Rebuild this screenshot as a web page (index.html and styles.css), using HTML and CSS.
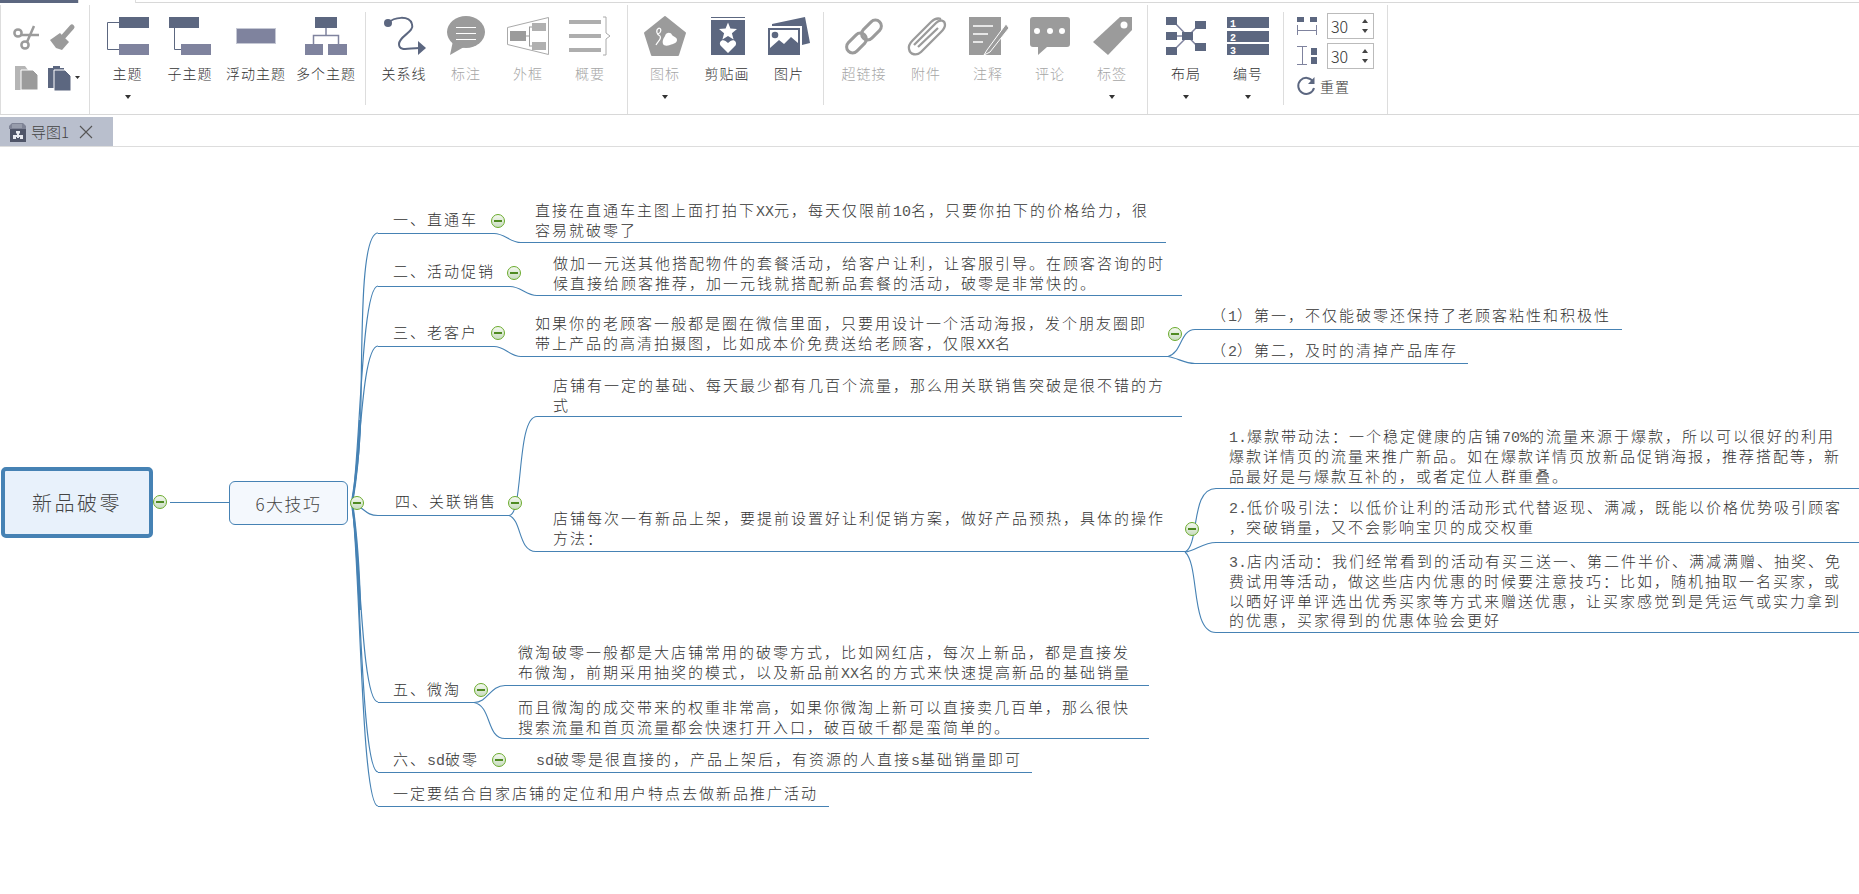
FILE: index.html
```html
<!DOCTYPE html>
<html lang="zh-CN">
<head>
    <meta charset="UTF-8">
    <title>新品破零</title>
    <link rel="stylesheet" href="styles.css">
</head>
<body>
    <div class="topstrip">
        <div class="strip-active"></div>
        <div class="strip-tab"></div>
        <div class="strip-rest"></div>
    </div>

    <div class="toolbar">
        <div class="group group-edit">
            <svg class="edit-icon" viewBox="0 0 36 40">
                <g fill="none" stroke="#9b9b9b" stroke-width="2.5">
                    <circle cx="10" cy="16" r="3.6"/>
                    <circle cx="17" cy="28" r="3.6"/>
                    <path d="M13 18L31 18M19 25L26 9"/>
                </g>
            </svg>
            <svg class="edit-icon" viewBox="0 0 36 40">
                <path d="M28 10L20 19" stroke="#9b9b9b" stroke-width="5" stroke-linecap="round"/>
                <path d="M6 23L16 16L25 25L18 33L12 31Z" fill="#9b9b9b"/>
            </svg>
            <svg class="edit-icon" viewBox="0 0 36 40">
                <path d="M7 8H17L20 12V32H7Z" fill="#b5b5b5"/>
                <path d="M13 12H25L30 17V32H13Z" fill="#9b9b9b" stroke="#fff"/>
            </svg>
            <svg class="edit-icon" viewBox="0 0 36 40">
                <path d="M4 10H9V8H16V10H20V30H4Z" fill="#5c6780"/>
                <path d="M10 12H21L27 18V33H10Z" fill="#5c6780" stroke="#fff"/>
                <path d="M31 18H36L33.500 21Z" fill="#333"/>
            </svg>
        </div>

        <div class="group group-insert">
            <div class="section section-topic">
                <div class="tool tool-w63">
                    <svg class="icon" viewBox="0 0 50 40">
                        <rect x="16" y="1" width="30" height="11" fill="#5c6780"/>
                        <rect x="16" y="28" width="30" height="11" fill="#7f839e"/>
                        <path d="M16 6.500H4.500V33.500H16" fill="none" stroke="#5c6780"/>
                    </svg>
                    <span class="label">主题</span>
                    <i class="caret"></i>
                </div>
                <div class="tool tool-w62">
                    <svg class="icon" viewBox="0 0 50 40">
                        <rect x="4" y="1" width="30" height="11" fill="#5c6780"/>
                        <rect x="16" y="28" width="30" height="11" fill="#7f839e"/>
                        <path d="M9.500 12V33.500H16" fill="none" stroke="#5c6780"/>
                    </svg>
                    <span class="label">子主题</span>
                </div>
                <div class="tool tool-w70">
                    <svg class="icon" viewBox="0 0 50 40">
                        <rect x="5.500" y="12.500" width="39" height="15" fill="#7f839e" stroke="#c5c8d4"/>
                    </svg>
                    <span class="label">浮动主题</span>
                </div>
                <div class="tool tool-w70">
                    <svg class="icon" viewBox="0 0 50 40">
                        <rect x="14" y="1" width="22" height="11" fill="#5c6780"/>
                        <rect x="4" y="28" width="18" height="11" fill="#7f839e"/>
                        <rect x="27" y="28" width="19" height="11" fill="#7f839e"/>
                        <path d="M25 12V19.500M12.500 28V19.500H37.500V28" fill="none" stroke="#7f839e" stroke-width="1.500"/>
                    </svg>
                    <span class="label">多个主题</span>
                </div>
            </div>
            <div class="sep sep-a"></div>
            <div class="section section-line">
                <div class="tool">
                    <svg class="icon" viewBox="0 0 50 40">
                        <circle cx="9" cy="7" r="4" fill="#5c6780"/>
                        <path d="M9 7C15 1 30 -1 33 8C36 16 20 20 20 28C20 36 30 32 40 32" fill="none" stroke="#5c6780" stroke-width="2"/>
                        <path d="M39 25L47 32L39 39Z" fill="#5c6780"/>
                    </svg>
                    <span class="label">关系线</span>
                </div>
                <div class="tool tool-off">
                    <svg class="icon" viewBox="0 0 50 40">
                        <ellipse cx="25" cy="16" rx="19" ry="16" fill="#9b9b9b"/>
                        <path d="M12 25L9 39L23 31Z" fill="#9b9b9b"/>
                        <path d="M15 11.500H35M15 17.500H35M15 23.500H35" stroke="#fff"/>
                    </svg>
                    <span class="label">标注</span>
                </div>
                <div class="tool tool-off">
                    <svg class="icon" viewBox="0 0 50 40">
                        <path d="M4.500 11.500L45.500 1.500V38.500L4.500 28.500Z" fill="none" stroke="#aaa"/>
                        <rect x="7" y="15" width="16" height="10" fill="#9b9b9b"/>
                        <rect x="29" y="7" width="14" height="8" fill="#b0b0b0"/>
                        <rect x="29" y="26" width="14" height="8" fill="#b0b0b0"/>
                        <path d="M23 20H26M26.500 11V30M26 11H29M26 30H29" fill="none" stroke="#9b9b9b"/>
                    </svg>
                    <span class="label">外框</span>
                </div>
                <div class="tool tool-off">
                    <svg class="icon" viewBox="0 0 50 40">
                        <rect x="4" y="4" width="32" height="4" fill="#aeaeae"/>
                        <rect x="4" y="18" width="32" height="4" fill="#aeaeae"/>
                        <rect x="4" y="32" width="32" height="4" fill="#aeaeae"/>
                        <path d="M38 1H41V17L45 20L41 23V39H38" fill="none" stroke="#aaa"/>
                    </svg>
                    <span class="label">概要</span>
                </div>
            </div>
        </div>

        <div class="group group-media">
            <div class="section section-art">
                <div class="tool tool-off">
                    <svg class="icon" viewBox="0 0 50 40">
                        <path d="M25 1L45 17L38 39H12L5 17Z" fill="#9b9b9b" stroke="#9b9b9b" stroke-linejoin="round" stroke-width="2"/>
                        <path d="M23 28C22 24 24 22 25 20C26 16 31 16 32 19C34 21 37 21 37 24C37 27 33 28 30 29C27 30 24 30 23 28Z" fill="#fff"/>
                        <path d="M19 12C15 14 17 19 20 20C22 23 18 25 16 29M19 12C22 13 21 17 18 18" fill="none" stroke="#fff" stroke-width="1.200"/>
                    </svg>
                    <span class="label">图标</span>
                    <i class="caret"></i>
                </div>
                <div class="tool">
                    <svg class="icon" viewBox="0 0 50 40">
                        <path d="M9 1.500H43" stroke="#5c6780"/>
                        <rect x="9" y="4" width="34" height="35" fill="#5c6780"/>
                        <path d="M26 6.500L28.400 12.600L35 13L29.900 17.200L31.600 23.500L26 20L20.400 23.500L22.100 17.200L17 13L23.600 12.600Z" fill="#fff"/>
                        <path d="M26 37L18.500 29.500C16.500 26 20 22.500 23.500 25L26 27L28.500 25C32 22.500 35.500 26 33.500 29.500Z" fill="#fff"/>
                    </svg>
                    <span class="label">剪贴画</span>
                </div>
                <div class="tool">
                    <svg class="icon" viewBox="0 0 50 40">
                        <path d="M8 8L41 1L46 27L38 29V10H8Z" fill="#5c6780"/>
                        <rect x="4" y="12" width="32" height="27" fill="#5c6780"/>
                        <path d="M6 14H34V27L27 21L20 28L15 24L6 32Z" fill="#fff"/>
                        <circle cx="11" cy="19" r="3.300" fill="#5c6780"/>
                    </svg>
                    <span class="label">图片</span>
                </div>
            </div>
            <div class="sep sep-b"></div>
            <div class="section section-note">
                <div class="tool tool-off">
                    <svg class="icon" viewBox="0 0 50 40">
                        <g fill="none" stroke="#9b9b9b" stroke-width="3">
                            <rect x="21" y="8" width="23" height="12" rx="6" transform="rotate(-45 32.500 14)"/>
                            <rect x="6" y="21" width="23" height="12" rx="6" transform="rotate(-45 17.500 27)"/>
                        </g>
                    </svg>
                    <span class="label">超链接</span>
                </div>
                <div class="tool tool-off">
                    <svg class="icon" viewBox="0 0 50 40">
                        <path d="M13 29L35 7C39 3 44 4 44 9C44 12 42 14 40 16L20 36C16 40 9 39 8 33C7 29 10 26 12 24L30 6C33 3 37 2 40 3M17 31L37 12" fill="none" stroke="#9b9b9b" stroke-width="2.300"/>
                    </svg>
                    <span class="label">附件</span>
                </div>
                <div class="tool tool-off">
                    <svg class="icon" viewBox="0 0 50 40">
                        <rect x="6" y="1" width="32" height="38" fill="#9b9b9b"/>
                        <path d="M10 10H30M10 18H25M10 26H20" stroke="#fff" stroke-width="1.600"/>
                        <path d="M43 8L24 34L21 39L27 36L46 12Z" fill="#9b9b9b" stroke="#fff"/>
                    </svg>
                    <span class="label">注释</span>
                </div>
                <div class="tool tool-off">
                    <svg class="icon" viewBox="0 0 50 40">
                        <path d="M8 1H42C44 1 45 2 45 4V28C45 30 44 31 42 31H22L13 39V31H8C6 31 5 30 5 28V4C5 2 6 1 8 1Z" fill="#9b9b9b"/>
                        <circle cx="12" cy="15" r="3" fill="#fff"/>
                        <circle cx="25" cy="15" r="3" fill="#fff"/>
                        <circle cx="37" cy="15" r="3" fill="#fff"/>
                    </svg>
                    <span class="label">评论</span>
                </div>
                <div class="tool tool-off">
                    <svg class="icon" viewBox="0 0 50 40">
                        <path d="M6 26L33 1H45V14L21 39Z" fill="#9b9b9b"/>
                        <circle cx="37" cy="9" r="3.500" fill="#fff"/>
                    </svg>
                    <span class="label">标签</span>
                    <i class="caret"></i>
                </div>
            </div>
        </div>

        <div class="group group-layout">
            <div class="section section-layout">
                <div class="tool">
                    <svg class="icon" viewBox="0 0 50 40">
                        <path d="M12 5L38 32M12 35L38 9M12 20H25" stroke="#7f839e" stroke-width="1.500"/>
                        <rect x="5" y="1" width="11" height="8" fill="#5c6780"/>
                        <rect x="5" y="16" width="11" height="8" fill="#5c6780"/>
                        <rect x="5" y="31" width="11" height="8" fill="#5c6780"/>
                        <rect x="21" y="16" width="11" height="8" fill="#5c6780"/>
                        <rect x="34" y="5" width="11" height="8" fill="#5c6780"/>
                        <rect x="34" y="27" width="11" height="8" fill="#5c6780"/>
                    </svg>
                    <span class="label">布局</span>
                    <i class="caret"></i>
                </div>
                <div class="tool">
                    <svg class="icon" viewBox="0 0 50 40">
                        <rect x="4" y="1" width="42" height="11" fill="#5c6780"/>
                        <rect x="4" y="15" width="42" height="11" fill="#5c6780"/>
                        <rect x="4" y="28" width="42" height="11" fill="#5c6780"/>
                        <text class="icon-num" x="7" y="10.500">1</text>
                        <text class="icon-num" x="7" y="24.500">2</text>
                        <text class="icon-num" x="7" y="37.500">3</text>
                    </svg>
                    <span class="label">编号</span>
                    <i class="caret"></i>
                </div>
            </div>
            <div class="sep sep-c"></div>
            <div class="spacing">
                <div class="spacing-row">
                    <svg class="spacing-icon" viewBox="0 0 22 28">
                        <rect x="1" y="5" width="7" height="5" fill="#5c6780"/>
                        <rect x="14" y="5" width="7" height="5" fill="#5c6780"/>
                        <path d="M1.500 13V23M20.500 13V23M1.500 18.500H20.500" fill="none" stroke="#7f839e"/>
                    </svg>
                    <div class="spin">
                        <span class="spin-value">30</span>
                        <span class="spin-arrows"><i class="spin-up"></i><i class="spin-down"></i></span>
                    </div>
                </div>
                <div class="spacing-row">
                    <svg class="spacing-icon" viewBox="0 0 22 28">
                        <path d="M1 4.500H11M1 22.500H11M6.500 4.500V22.500" fill="none" stroke="#7f839e"/>
                        <rect x="15" y="6" width="6" height="7" fill="#5c6780"/>
                        <rect x="15" y="15" width="6" height="7" fill="#5c6780"/>
                    </svg>
                    <div class="spin">
                        <span class="spin-value">30</span>
                        <span class="spin-arrows"><i class="spin-up"></i><i class="spin-down"></i></span>
                    </div>
                </div>
                <div class="reset">
                    <svg class="reset-icon" viewBox="0 0 20 20">
                        <path d="M17 5.500A8 8 0 1 0 18 12" fill="none" stroke="#5c6780" stroke-width="2"/>
                        <path d="M18.500 1V8H12Z" fill="#5c6780"/>
                    </svg>
                    <span>重置</span>
                </div>
            </div>
        </div>
    </div>

    <div class="tabbar">
        <div class="tab">
            <svg class="tab-icon" viewBox="0 0 20 20">
                <path d="M2 7V4L5 1H16L19 4V7Z" fill="#7f8496"/>
                <path d="M5 3H15M5 5H15" stroke="#c6cad6" stroke-width="0.700"/>
                <rect x="3" y="7" width="16" height="13" fill="#4f5568"/>
                <path d="M9 9H13V11.500H12V13H16V17H13V15H12V16H10V15H9V17H6V13H10V11.500H9Z" fill="#e8eaf0"/>
            </svg>
            <span class="tab-title">导图1</span>
            <svg class="tab-close" viewBox="0 0 14 14">
                <path d="M1 1L13 13M13 1L1 13" stroke="#555" stroke-width="1.100"/>
            </svg>
        </div>
    </div>

    <div class="canvas">
        <svg class="links" viewBox="0 147 1859 747">
            <g class="trunk">
                <path d="M352 503C358 470 361 440 361 400C362 320 362 233 378 233"/>
                <path d="M352 503C360 460 361 286 378 286"/>
                <path d="M352 503C360 470 361 346 378 346"/>
                <path d="M352 503C360 540 361 702 378 702"/>
                <path d="M352 503C360 550 361 772 378 772"/>
                <path d="M352 503C360 560 361 806 378 806"/>
                <path d="M357 505C366 511 368 515.500 378 515.500"/>
                <path class="trunk-thick" d="M352 503C356 480 359 450 360 420"/>
                <path class="trunk-thick" d="M352 503C356 530 359 570 360 610"/>
            </g>
            <g class="branch">
                <path d="M170 502.500H229"/>
                <path d="M378 233.500H494C505 233.500 510 242.500 521 242.500H1166"/>
                <path d="M378 286.500H510C521 286.500 526 295.500 537 295.500H1182"/>
                <path d="M378 346.500H494C505 346.500 510 356.500 521 356.500H1168"/>
                <path d="M1168 356.500C1182 353 1180 329.500 1195 329.500H1622"/>
                <path d="M1168 356.500C1178 358 1184 363.500 1195 363.500H1468"/>
                <path d="M378 515.500H509C524 515.500 516 416.500 537 416.500H1182"/>
                <path d="M509 515.500C522 520 518 551.500 536 551.500H1185"/>
                <path d="M1185 552C1200 545 1190 488.500 1216 488.500H1859"/>
                <path d="M1185 552C1195 551 1203 542.500 1216 542.500H1859"/>
                <path d="M1185 552C1200 565 1190 632.500 1216 632.500H1859"/>
                <path d="M378 702.500H474C488 702.500 490 685.500 505 685.500H1149"/>
                <path d="M474 702.500C492 706 486 738.500 505 738.500H1149"/>
                <path d="M378 772.500H1032"/>
                <path d="M378 806.500H829"/>
            </g>
        </svg>

        <div class="root">新品破零</div>
        <div class="topic">6大技巧</div>

        <div class="node l1">一、直通车</div>
        <div class="node l2">二、活动促销</div>
        <div class="node l3">三、老客户</div>
        <div class="node l4">四、关联销售</div>
        <div class="node l5">五、微淘</div>
        <div class="node l6">六、<span class="latin">sd</span>破零</div>
        <div class="node l7">一定要结合自家店铺的定位和用户特点去做新品推广活动</div>

        <div class="node t1">直接在直通车主图上面打拍下<span class="latin">XX</span>元，每天仅限前<span class="latin">10</span>名，只要你拍下的价格给力，很<br>容易就破零了</div>
        <div class="node t2">做加一元送其他搭配物件的套餐活动，给客户让利，让客服引导。在顾客咨询的时<br>候直接给顾客推荐，加一元钱就搭配新品套餐的活动，破零是非常快的。</div>
        <div class="node t3">如果你的老顾客一般都是圈在微信里面，只要用设计一个活动海报，发个朋友圈即<br>带上产品的高清拍摄图，比如成本价免费送给老顾客，仅限<span class="latin">XX</span>名</div>
        <div class="node t3a">（<span class="latin">1</span>）第一，不仅能破零还保持了老顾客粘性和积极性</div>
        <div class="node t3b">（<span class="latin">2</span>）第二，及时的清掉产品库存</div>
        <div class="node t4a">店铺有一定的基础、每天最少都有几百个流量，那么用关联销售突破是很不错的方<br>式</div>
        <div class="node t4b">店铺每次一有新品上架，要提前设置好让利促销方案，做好产品预热，具体的操作<br>方法：</div>
        <div class="node t41"><span class="latin">1.</span>爆款带动法：一个稳定健康的店铺<span class="latin">70%</span>的流量来源于爆款，所以可以很好的利用<br>爆款详情页的流量来推广新品。如在爆款详情页放新品促销海报，推荐搭配等，新<br>品最好是与爆款互补的，或者定位人群重叠。</div>
        <div class="node t42"><span class="latin">2.</span>低价吸引法：以低价让利的活动形式代替返现、满减，既能以价格优势吸引顾客<br>，突破销量，又不会影响宝贝的成交权重</div>
        <div class="node t43"><span class="latin">3.</span>店内活动：我们经常看到的活动有买三送一、第二件半价、满减满赠、抽奖、免<br>费试用等活动，做这些店内优惠的时候要注意技巧：比如，随机抽取一名买家，或<br>以晒好评单评选出优秀买家等方式来赠送优惠，让买家感觉到是凭运气或实力拿到<br>的优惠，买家得到的优惠体验会更好</div>
        <div class="node t5a">微淘破零一般都是大店铺常用的破零方式，比如网红店，每次上新品，都是直接发<br>布微淘，前期采用抽奖的模式，以及新品前<span class="latin">XX</span>名的方式来快速提高新品的基础销量</div>
        <div class="node t5b">而且微淘的成交带来的权重非常高，如果你微淘上新可以直接卖几百单，那么很快<br>搜索流量和首页流量都会快速打开入口，破百破千都是蛮简单的。</div>
        <div class="node t6"><span class="latin">sd</span>破零是很直接的，产品上架后，有资源的人直接<span class="latin">s</span>基础销量即可</div>

        <span class="toggle g-root"></span>
        <span class="toggle g-topic"></span>
        <span class="toggle g1"></span>
        <span class="toggle g2"></span>
        <span class="toggle g3"></span>
        <span class="toggle g3r"></span>
        <span class="toggle g4"></span>
        <span class="toggle g4r"></span>
        <span class="toggle g5"></span>
        <span class="toggle g6"></span>
    </div>
</body>
</html>
```

FILE: styles.css
```css
* {
    box-sizing: border-box;
}
html, body {
    margin: 0;
    height: 894px;
    overflow: hidden;
    background: #fff;
}
body {
    font-family: "Noto Sans CJK SC", "Noto Sans", sans-serif;
    color: #333;
}

/* top strip */
.topstrip {
    display: flex;
    height: 3px;
}
.strip-active {
    width: 78px;
    background: #5c6780;
}
.strip-tab {
    width: 58px;
    border-left: 1px solid #ddd;
    border-right: 1px solid #ddd;
}
.strip-rest {
    flex: 1;
    border-bottom: 1px solid #d8d8d8;
}

/* toolbar */
.toolbar {
    display: flex;
    height: 112px;
    padding-top: 2px;
    border-bottom: 1px solid #d8d8d8;
}
.group {
    display: flex;
    border-right: 1px solid #ddd;
}
.group-edit {
    display: grid;
    grid-template-columns: 36px 36px;
    grid-auto-rows: 41px;
    width: 90px;
    padding: 12px 0 0 7px;
    border-left: 1px solid #ddd;
}
.edit-icon {
    width: 36px;
    height: 40px;
    overflow: visible;
}
.group-insert {
    width: 538px;
    padding-left: 6px;
}
.group-media {
    width: 520px;
    padding-left: 6px;
}
.group-layout {
    width: 240px;
    padding-left: 7px;
}
.section {
    display: flex;
}
.sep {
    width: 1px;
    margin: 7px 0 9px;
    background: #ddd;
}
.sep-a {
    margin-left: 4px;
    margin-right: 7px;
}
.sep-b {
    margin-left: 3px;
    margin-right: 9px;
}
.sep-c {
    margin-left: 4px;
}
.tool {
    display: flex;
    flex-direction: column;
    align-items: center;
    width: 62px;
    padding-top: 11px;
}
.tool-w62 {
    width: 62px;
}
.tool-w63 {
    width: 63px;
}
.tool-w70 {
    width: 70px;
}
.icon {
    flex: none;
    width: 50px;
    height: 40px;
    overflow: visible;
}
.icon-num {
    font-family: "Liberation Mono", monospace;
    font-size: 10px;
    font-weight: bold;
    fill: #fff;
}
.label {
    margin-top: 7px;
    font-size: 14px;
    font-weight: 300;
    line-height: 20px;
    letter-spacing: 1px;
    white-space: nowrap;
}
.tool-off .label {
    color: #a6a6a6;
}
.caret {
    width: 0;
    height: 0;
    margin-top: 12px;
    border-left: 3px solid transparent;
    border-right: 3px solid transparent;
    border-top: 4px solid #333;
}

/* spacing controls */
.spacing {
    padding: 8px 0 0 12px;
}
.spacing-row {
    display: flex;
    align-items: center;
    gap: 9px;
    height: 26px;
    margin-bottom: 4px;
}
.spacing-icon {
    width: 22px;
    height: 28px;
}
.spin {
    display: flex;
    justify-content: space-between;
    width: 47px;
    height: 26px;
    padding: 0 5px 0 3px;
    border: 1px solid #bbb;
}
.spin-value {
    font-size: 16px;
    font-weight: 300;
    line-height: 24px;
}
.spin-arrows {
    display: flex;
    flex-direction: column;
    justify-content: center;
    gap: 6px;
}
.spin-up, .spin-down {
    width: 0;
    height: 0;
    border-left: 3px solid transparent;
    border-right: 3px solid transparent;
}
.spin-up {
    border-bottom: 4px solid #444;
}
.spin-down {
    border-top: 4px solid #444;
}
.reset {
    display: flex;
    align-items: center;
    gap: 4px;
    height: 22px;
    margin-top: 6px;
    font-size: 14px;
    font-weight: 300;
    letter-spacing: 1px;
}
.reset-icon {
    width: 20px;
    height: 20px;
}

/* tab bar */
.tabbar {
    height: 30px;
    margin-top: 2px;
    border-bottom: 1px solid #ddd;
}
.tab {
    display: flex;
    align-items: center;
    width: 113px;
    height: 29px;
    padding-left: 7px;
    background: #b9bfcd;
}
.tab-icon {
    width: 20px;
    height: 20px;
}
.tab-title {
    margin-left: 4px;
    font-size: 15px;
    font-weight: 300;
    color: #444;
}
.tab-close {
    width: 14px;
    height: 14px;
    margin-left: 10px;
}

/* mind map canvas */
.canvas {
    position: relative;
    height: 747px;
    overflow: hidden;
}
.links {
    position: absolute;
    left: 0;
    top: 0;
    width: 1859px;
    height: 747px;
}
.links path {
    fill: none;
    stroke: #4682b4;
}
.trunk path {
    stroke-width: 1.200;
}
.links .trunk-thick {
    stroke-width: 2.400;
}
.branch path {
    stroke-width: 1.100;
}
.root, .topic {
    position: absolute;
    display: flex;
    align-items: center;
    justify-content: center;
    white-space: nowrap;
    font-weight: 300;
    color: #444;
}
.root {
    left: 1px;
    top: 320px;
    width: 152px;
    height: 71px;
    border: 4px solid #4682b4;
    border-radius: 5px;
    background: #e8f1fb;
    font-size: 20px;
    letter-spacing: 2.500px;
}
.topic {
    left: 229px;
    top: 334px;
    width: 119px;
    height: 44px;
    border: 1px solid #4682b4;
    border-radius: 6px;
    background: #f4f8fd;
    font-size: 17px;
    letter-spacing: 1.500px;
}
.node {
    position: absolute;
    margin-top: -2px;
    font-family: "Noto Sans CJK SC", sans-serif;
    font-size: 15px;
    font-weight: 300;
    line-height: 19.500px;
    letter-spacing: 2px;
    white-space: nowrap;
    color: #333;
}
.latin {
    font-family: "Liberation Mono", monospace;
    line-height: 1;
    letter-spacing: 0;
    color: #555;
}
.l1, .l2, .l3, .l5, .l6, .l7 { left: 393px; }
.l1 { top: 64px; }
.l2 { top: 116px; }
.l3 { top: 177px; }
.l4 { left: 395px; top: 346px; }
.l5 { top: 534px; }
.l6 { top: 604px; }
.l7 { top: 638px; }
.t1 { left: 535px; top: 55px; }
.t2 { left: 553px; top: 108px; }
.t3 { left: 535px; top: 168px; }
.t3a { left: 1211px; top: 160px; }
.t3b { left: 1211px; top: 195px; }
.t4a { left: 553px; top: 230px; }
.t4b { left: 553px; top: 363px; }
.t41 { left: 1229px; top: 281px; }
.t42 { left: 1229px; top: 352px; }
.t43 { left: 1229px; top: 406px; }
.t5a { left: 518px; top: 497px; }
.t5b { left: 518px; top: 552px; }
.t6 { left: 536px; top: 604px; }

.toggle {
    position: absolute;
    width: 14px;
    height: 14px;
    border: 1px solid #6aab2c;
    border-radius: 50%;
    background: linear-gradient(#f4f8f0, #c9dcc0);
}
.toggle::after {
    content: "";
    position: absolute;
    left: 2px;
    top: 5px;
    width: 8px;
    height: 2px;
    background: #4f8a22;
}
.g-root { left: 153px; top: 348px; }
.g-topic { left: 350px; top: 349px; }
.g1 { left: 491px; top: 67px; }
.g2 { left: 507px; top: 119px; }
.g3 { left: 491px; top: 179px; }
.g3r { left: 1168px; top: 180px; }
.g4 { left: 508px; top: 349px; }
.g4r { left: 1185px; top: 375px; }
.g5 { left: 474px; top: 536px; }
.g6 { left: 492px; top: 606px; }
```
